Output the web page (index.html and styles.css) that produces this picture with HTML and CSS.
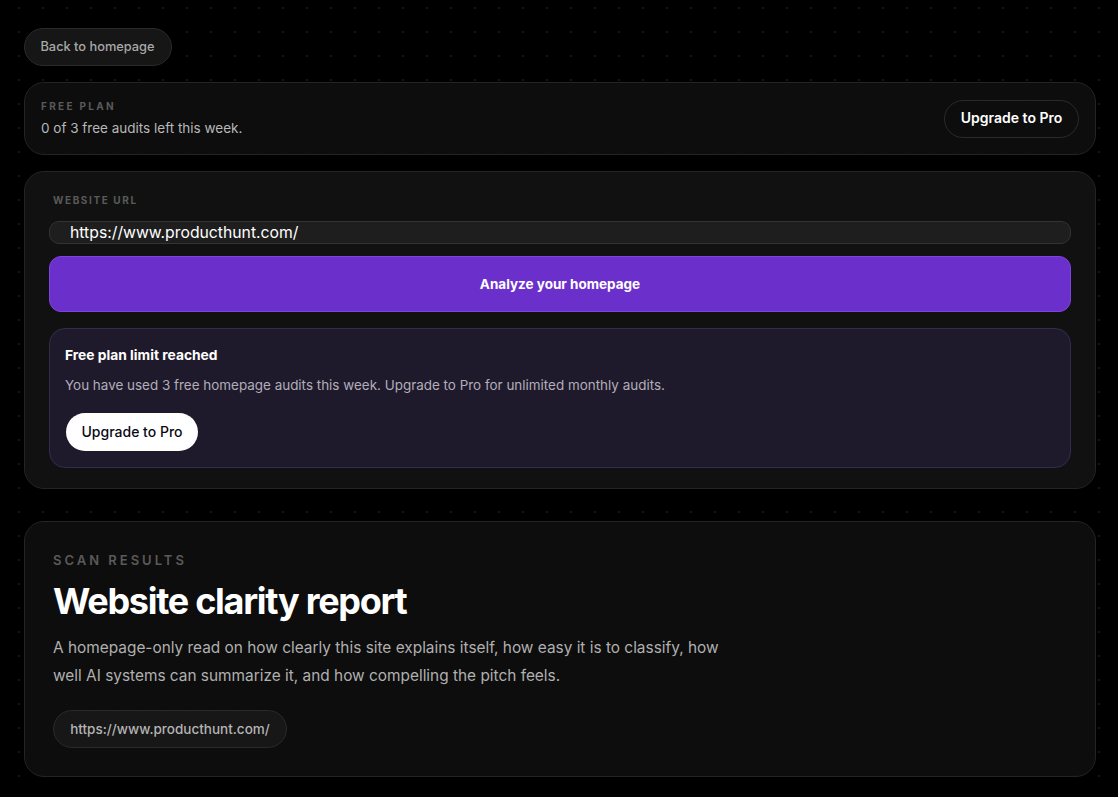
FILE: index.html
```html
<!DOCTYPE html>
<html lang="en">
<head>
<meta charset="utf-8">
<title>Website clarity report</title>
<link rel="stylesheet" href="styles.css">
</head>
<body>
<main class="page">
  <a class="pill back" href="#">Back to homepage</a>
  <section class="card plan">
    <div>
      <div class="plan-label">FREE PLAN</div>
      <div class="plan-text">0 of 3 free audits left this week.</div>
    </div>
    <a class="pill upgrade-ghost" href="#">Upgrade to Pro</a>
  </section>
  <section class="card form">
    <label class="url-label" for="url">WEBSITE URL</label>
    <input class="url-input" id="url" type="text" value="https://www.producthunt.com/">
    <button class="analyze" type="button">Analyze your homepage</button>
    <div class="limit">
      <h3>Free plan limit reached</h3>
      <p>You have used 3 free homepage audits this week. Upgrade to Pro for unlimited monthly audits.</p>
      <a class="upgrade-solid" href="#">Upgrade to Pro</a>
    </div>
  </section>
  <section class="card results">
    <div class="eyebrow">SCAN RESULTS</div>
    <h1>Website clarity report</h1>
    <p class="lead">A homepage-only read on how clearly this site explains itself, how easy it is to classify, how well AI systems can summarize it, and how compelling the pitch feels.</p>
    <a class="pill site" href="#">https://www.producthunt.com/</a>
  </section>
</main>
</body>
</html>
```
FILE: styles.css
```css
* { box-sizing: border-box; }
html, body { margin: 0; height: 797px; overflow: hidden; }
body {
  background-color: #000;
  background-image: radial-gradient(circle at center, #161616 0.8px, transparent 1.1px);
  background-size: 24px 24px;
  background-position: 7px -4px;
  font-family: Inter, "Liberation Sans", sans-serif;
  color: #fff;
}
a { text-decoration: none; }
.page { display: flex; flex-direction: column; align-items: flex-start; padding: 28px 22px 20px 24px; }
.pill { display: inline-flex; align-items: center; justify-content: center; border-radius: 999px; border: 1px solid #2a2a2a; }
.back { width: 148px; height: 38px; padding: 0 1px 2px 0; background: #161616; color: #a8a8a8; font-size: 12.8px; font-weight: 500; margin-bottom: 16px; }
.card { width: 1072px; border: 1px solid #242424; border-radius: 20px; }
.plan {
  height: 73px; display: flex; align-items: center; justify-content: space-between;
  padding: 0 16px 0 16px; background: rgba(17,17,17,.75); margin-bottom: 16px;
}
.plan-label { font-size: 10px; font-weight: 700; letter-spacing: 2.3px; color: #5a5a5a; margin-bottom: 8px; line-height: 12px; margin-top: -1px; }
.plan-text { font-size: 13.5px; color: #b8b8b8; line-height: 16px; }
.upgrade-ghost { width: 135px; height: 38px; padding-bottom: 2px; color: #fff; font-size: 14px; font-weight: 600; background: transparent; }
.form { height: 318px; background: #111; padding: 21px 24px 20px; margin-bottom: 32px; }
.url-label { display: block; margin-left: 4px; font-size: 10px; font-weight: 700; letter-spacing: 1.6px; color: #5a5a5a; line-height: 14px; margin-bottom: 14px; }
.url-input {
  display: block; width: 100%; height: 23px; border: 1px solid #333; border-radius: 10px; background: #1e1e1e;
  color: #fff; font: 400 15.75px Inter, "Liberation Sans", sans-serif; padding: 0 20px; margin-bottom: 12px; outline: none;
}
.analyze {
  display: block; width: 100%; height: 56px; border: 1px solid #7c45e0; border-radius: 12px; background: #6b2fcc;
  color: #fff; font: 700 13.5px Inter, "Liberation Sans", sans-serif; margin-bottom: 16px;
}
.limit { height: 140px; border: 1px solid #332c4c; border-radius: 16px; background: #1f1a2b; padding: 18px 15px; }
.limit h3 { margin: 0 0 13px; font-size: 13.8px; font-weight: 700; line-height: 16px; color: #fff; }
.limit p { margin: 0 0 19px; font-size: 13.45px; line-height: 18px; color: #b2aeba; }
.upgrade-solid { display: flex; align-items: center; justify-content: center; width: 132px; height: 38px; border-radius: 999px; background: #fff; color: #0a0a14; font-size: 14px; font-weight: 500; margin-left: 1px; padding-bottom: 1px; }
.results { height: 256px; background: rgba(17,17,17,.75); padding: 30px 28px; }
.eyebrow { font-size: 13px; font-weight: 600; letter-spacing: 3px; color: #5a5a5a; line-height: 16px; margin-bottom: 11px; }
h1 { margin: 0 0 11px; font-size: 36px; font-weight: 700; letter-spacing: -1.28px; line-height: 44px; color: #fff; }
.lead { margin: 0 0 20px; max-width: 680px; font-size: 15.4px; line-height: 28px; color: #b0b0b0; }
.site { width: 234px; height: 38px; background: #171717; color: #b4b4b4; font-size: 13.5px; font-weight: 500; }
```
